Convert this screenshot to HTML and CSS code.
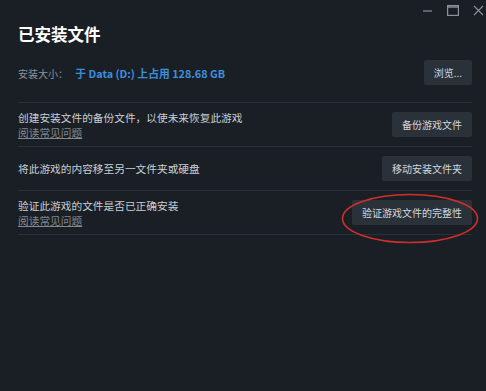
FILE: index.html
```html
<!DOCTYPE html>
<html lang="zh-CN">
<head>
<meta charset="UTF-8">
<meta name="viewport" content="width=device-width, initial-scale=1.0">
<title>已安装文件</title>
<link rel="stylesheet" href="styles.css">
</head>
<body>

<div class="titlebar">
  <span class="win-btn">
    <svg width="11" height="11" viewBox="0 0 11 11"><path d="M1 6 H10" stroke="#8b929a" stroke-width="1.2"/></svg>
  </span>
  <span class="win-btn">
    <svg width="12" height="11" viewBox="0 0 12 11"><rect x="0.6" y="0.6" width="10.8" height="9.8" fill="none" stroke="#8b929a" stroke-width="1.2"/><path d="M0.6 2 H11.4" stroke="#8b929a" stroke-width="1.4"/></svg>
  </span>
  <span class="win-btn">
    <svg width="11" height="11" viewBox="0 0 11 11"><path d="M1 1 L10 10 M10 1 L1 10" stroke="#8b929a" stroke-width="1.1"/></svg>
  </span>
</div>

<div class="content">
  <h1 class="title">已安装文件</h1>

  <div class="size-row">
    <div class="size-info">
      <span class="label">安装大小：</span>
      <span class="value">于 Data (D:) 上占用 128.68 GB</span>
    </div>
    <button class="btn">浏览...</button>
  </div>

  <div class="row">
    <div class="row-text">
      <div>创建安装文件的备份文件，以使未来恢复此游戏</div>
      <a class="faq" href="#">阅读常见问题</a>
    </div>
    <button class="btn">备份游戏文件</button>
  </div>

  <div class="row">
    <div class="row-text">
      <div>将此游戏的内容移至另一文件夹或硬盘</div>
    </div>
    <button class="btn">移动安装文件夹</button>
  </div>

  <div class="row last">
    <div class="row-text">
      <div>验证此游戏的文件是否已正确安装</div>
      <a class="faq" href="#">阅读常见问题</a>
    </div>
    <button class="btn marked">验证游戏文件的完整性
      <!-- red circle drawn over the screenshot -->
      <svg class="circle" width="138" height="51" viewBox="0 0 138 51">
        <ellipse cx="69" cy="25.5" rx="67.5" ry="24" fill="none" stroke="#d12f2a" stroke-width="1.6"/>
      </svg>
    </button>
  </div>
</div>

</body>
</html>
```

FILE: styles.css
```css
body {
  margin: 0;
  height: 100vh;
  background-color: #1a1f26;
  font-family: "Noto Sans CJK SC", "Noto Sans", sans-serif;
  color: #c9ced4;
}
.titlebar {
  height: 20px;
  display: flex;
  justify-content: flex-end;
  align-items: center;
  gap: 14px;
  padding-right: 2px;
}
.win-btn {
  display: flex;
  align-items: center;
}
.content {
  padding: 0 14px 0 18px;
}
.title {
  margin: 2px 0 0 0;
  font-size: 16.5px;
  line-height: 24px;
  font-weight: 700;
  color: #ffffff;
}
.size-row {
  margin-top: 14px;
  padding-bottom: 17px;
  display: flex;
  justify-content: space-between;
  align-items: center;
  border-bottom: 1px solid #2a3038;
}
.size-info {
  font-size: 10px;
}
.label {
  color: #8a9199;
  margin-right: 5px;
}
.value {
  color: #3d8fdc;
  font-weight: 700;
  font-size: 10.8px;
}
.row {
  height: 43px;
  display: flex;
  justify-content: space-between;
  align-items: center;
  border-bottom: 1px solid #2a3038;
}
.row-text {
  font-size: 10.7px;
  line-height: 15px;
  color: #c9ced4;
}
.faq {
  color: #80878f;
  text-decoration: underline;
}
.btn {
  position: relative;
  height: 25px;
  padding: 0 10px;
  border: none;
  border-radius: 2px;
  background-color: #2b3139;
  color: #d3d7db;
  font-family: "Noto Sans CJK SC", "Noto Sans", sans-serif;
  font-size: 10px;
}
.marked .circle {
  position: absolute;
  left: -11px;
  top: -7px;
  pointer-events: none;
}
```
